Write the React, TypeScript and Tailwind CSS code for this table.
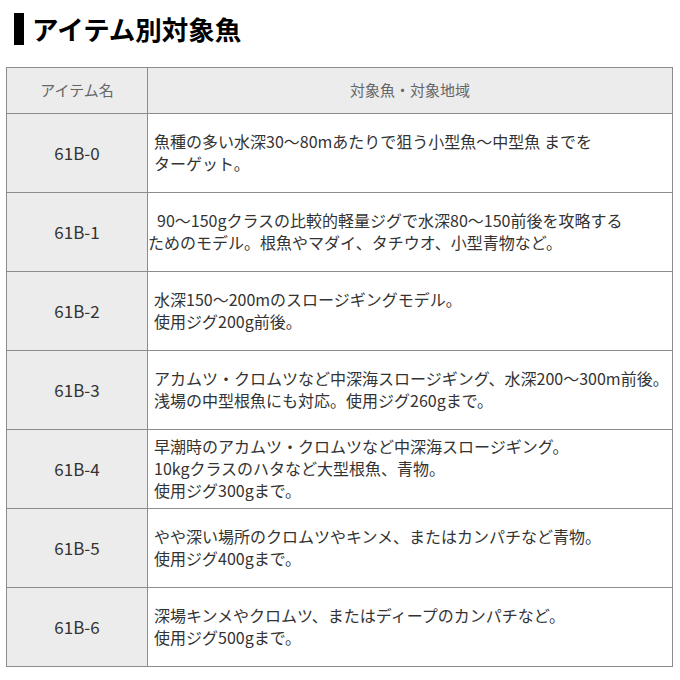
const rows: { name: string; lines: string[]; indent?: number[] }[] = [
  { name: '61B-0', lines: ['魚種の多い水深30～80mあたりで狙う小型魚～中型魚 までを', 'ターゲット。'] },
  {
    name: '61B-1',
    lines: ['90～150gクラスの比較的軽量ジグで水深80～150前後を攻略する', 'ためのモデル。根魚やマダイ、タチウオ、小型青物など。'],
    indent: [9, 0],
  },
  { name: '61B-2', lines: ['水深150～200mのスロージギングモデル。', '使用ジグ200g前後。'] },
  { name: '61B-3', lines: ['アカムツ・クロムツなど中深海スロージギング、水深200～300m前後。', '浅場の中型根魚にも対応。使用ジグ260gまで。'] },
  {
    name: '61B-4',
    lines: ['早潮時のアカムツ・クロムツなど中深海スロージギング。', '10kgクラスのハタなど大型根魚、青物。', '使用ジグ300gまで。'],
  },
  { name: '61B-5', lines: ['やや深い場所のクロムツやキンメ、またはカンパチなど青物。', '使用ジグ400gまで。'] },
  { name: '61B-6', lines: ['深場キンメやクロムツ、またはディープのカンパチなど。', '使用ジグ500gまで。'] },
];

export default function App() {
  return (
    <div className="w-[680px] h-[680px] bg-white pt-[13px] font-['Noto_Sans_CJK_JP',sans-serif] text-[#333]">
      <div className="flex items-center h-[32px] pl-[14px]">
        <div className="w-[10px] h-[32px] bg-black" />
        <h1 className="ml-[8px] text-[26.5px] font-bold leading-none text-black">アイテム別対象魚</h1>
      </div>

      <table className="ml-[6px] mt-[22px] w-[667px] border-collapse table-fixed">
        <colgroup>
          <col className="w-[141px]" />
          <col />
        </colgroup>
        <thead>
          <tr className="h-[46px] bg-[#ececec]">
            <th className="border border-[#8c8c8c] font-normal text-[15px] text-[#666]">アイテム名</th>
            <th className="border border-[#8c8c8c] font-normal text-[15px] text-[#666]">対象魚・対象地域</th>
          </tr>
        </thead>
        <tbody>
          {rows.map((r) => (
            <tr key={r.name} className="h-[79px]">
              <td className="border border-[#8c8c8c] bg-[#ececec] text-center text-[17px]">{r.name}</td>
              <td className="border border-[#8c8c8c] bg-white pl-[6px] pr-0 pb-[3px] text-[16px] leading-[22px]">
                {r.lines.map((l, i) => (
                  <div
                    key={i}
                    className="whitespace-nowrap"
                    style={r.indent ? { marginLeft: r.indent[i] - 6 } : undefined}
                  >
                    {l}
                  </div>
                ))}
              </td>
            </tr>
          ))}
        </tbody>
      </table>
    </div>
  );
}
